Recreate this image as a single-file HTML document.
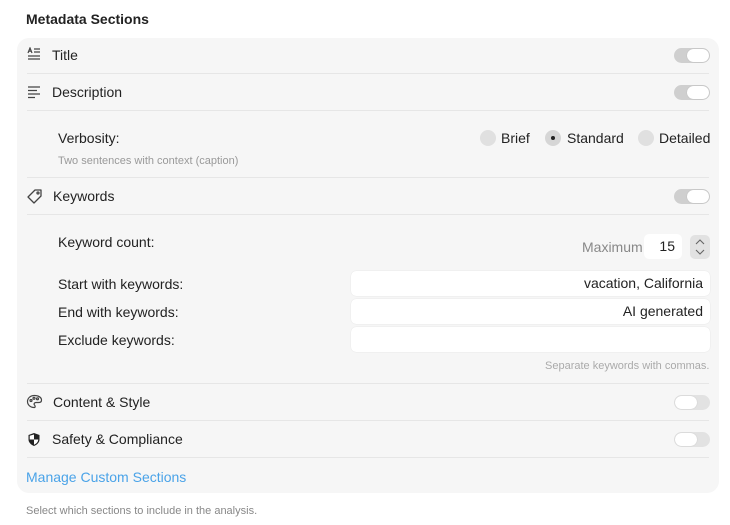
<!DOCTYPE html>
<html><head><meta charset="utf-8"><style>
*{box-sizing:border-box;margin:0;padding:0}
body{width:730px;height:525px;background:#fff;font-family:"Liberation Sans",sans-serif;color:#222;position:relative;overflow:hidden}
.a{position:absolute;white-space:nowrap}
.card{position:absolute;left:17px;top:38px;width:702px;height:455px;background:#f6f6f6;border-radius:12px}
.hr{position:absolute;left:27px;width:682px;height:1px;background:#e6e6e6}
.lbl{font-size:14px;color:#222;line-height:16px}
.tg{position:absolute;left:674px;width:36px;height:15px;border-radius:8px}
.tg.on{background:#cfcfcf}
.tg.off{background:#e2e2e2}
.tg i{position:absolute;top:1px;width:22px;height:13px;border-radius:7px;background:#fff;box-shadow:0 0 1px rgba(0,0,0,.2)}
.tg.on i{right:1px}.tg.off i{left:1px}
.rd{position:absolute;width:16px;height:16px;border-radius:50%;background:#e0e0e0}
.in{position:absolute;left:351px;width:359px;height:25px;background:#fff;border-radius:5px;font-size:14px;text-align:right;padding-right:7px;line-height:25px;box-shadow:0 0 1px rgba(0,0,0,.15)}
.sm{font-size:11px;color:#999}
</style></head><body>
<div class="a" style="left:26px;top:11px;font-size:14px;font-weight:bold;color:#222">Metadata Sections</div>
<div class="card"></div>

<svg class="a" style="left:27px;top:47px" width="15" height="15" viewBox="0 0 15 15" fill="none" stroke="#444" stroke-width="1.2"><path d="M1 6L3 1L5 6M1.8 4.2H4.2M7 2H13M7 5H13M1 9H13M1 12H13"/></svg>
<div class="a lbl" style="left:52px;top:47px">Title</div>
<div class="tg on" style="top:48px"><i></i></div>
<div class="hr" style="top:73px"></div>

<svg class="a" style="left:27px;top:85px" width="15" height="14" viewBox="0 0 15 14" fill="none" stroke="#444" stroke-width="1.2"><path d="M1 2H13M1 5.5H10M1 9H13M1 12.5H8"/></svg>
<div class="a lbl" style="left:52px;top:84px">Description</div>
<div class="tg on" style="top:85px"><i></i></div>
<div class="hr" style="top:110px"></div>

<div class="a lbl" style="left:58px;top:130px">Verbosity:</div>
<div class="rd" style="left:480px;top:130px"></div>
<div class="a lbl" style="left:501px;top:130px">Brief</div>
<div class="rd" style="left:545px;top:130px;background:#d6d6d6"><i style="position:absolute;left:6px;top:6px;width:4px;height:4px;border-radius:50%;background:#222"></i></div>
<div class="a lbl" style="left:567px;top:130px">Standard</div>
<div class="rd" style="left:638px;top:130px"></div>
<div class="a lbl" style="left:659px;top:130px">Detailed</div>
<div class="a sm" style="left:58px;top:155px">Two sentences with context (caption)</div>
<div class="hr" style="top:177px"></div>

<svg class="a" style="left:26px;top:188px" width="17" height="17" viewBox="0 0 17 17" fill="none" stroke="#444" stroke-width="1.3"><path d="M9 2H15V8L8 15L2 9Z" stroke-linejoin="round"/><circle cx="12" cy="5" r="1"/></svg>
<div class="a lbl" style="left:53px;top:188px">Keywords</div>
<div class="tg on" style="top:189px"><i></i></div>
<div class="hr" style="top:214px"></div>

<div class="a lbl" style="left:58px;top:234px">Keyword count:</div>
<div class="a lbl" style="left:582px;top:239px;color:#888">Maximum</div>
<div class="a" style="left:644px;top:234px;width:38px;height:25px;background:#fff;border-radius:5px;font-size:14px;line-height:25px;text-align:right;padding-right:7px">15</div>
<div class="a" style="left:690px;top:235px;width:20px;height:24px;background:#e2e2e2;border-radius:5px"></div>
<svg class="a" style="left:693px;top:237px" width="14" height="20" viewBox="0 0 14 20" fill="none" stroke="#666" stroke-width="1.1"><path d="M3 7L7 3L11 7M3 13L7 17L11 13"/></svg>

<div class="a lbl" style="left:58px;top:276px">Start with keywords:</div>
<div class="in" style="top:271px">vacation, California</div>
<div class="a lbl" style="left:58px;top:304px">End with keywords:</div>
<div class="in" style="top:299px">AI generated</div>
<div class="a lbl" style="left:58px;top:332px">Exclude keywords:</div>
<div class="in" style="top:327px"></div>
<div class="a sm" style="left:545px;top:360px;color:#aaa">Separate keywords with commas.</div>
<div class="hr" style="top:383px"></div>

<svg class="a" style="left:26px;top:394px" width="17" height="15" viewBox="0 0 17 15" fill="none" stroke="#444" stroke-width="1.2"><path d="M8.5 1.5C4 1.5 1.5 4.5 1.5 7.5C1.5 11 4.5 13.5 8 13.5C9.5 13.5 9.5 12 8.5 11C7.5 10 8.5 8.5 10 8.5H13C14.5 8.5 15.5 7.5 15.5 6C15.5 3.5 12.5 1.5 8.5 1.5Z"/><circle cx="5" cy="6.5" r="1"/><circle cx="8" cy="4.3" r="1"/><circle cx="11.5" cy="4.8" r="1"/></svg>
<div class="a lbl" style="left:53px;top:394px">Content &amp; Style</div>
<div class="tg off" style="top:395px"><i></i></div>
<div class="hr" style="top:420px"></div>

<svg class="a" style="left:27px;top:432px" width="14" height="15" viewBox="0 0 14 15"><path d="M7 1L12.5 3V7.5C12.5 10.5 10 12.8 7 14C4 12.8 1.5 10.5 1.5 7.5V3Z" fill="#222"/><path d="M7 2.5V7.5H11.3C11.2 10 9.2 11.8 7 12.8V7.5H2.7V3.8Z" fill="#fff"/></svg>
<div class="a lbl" style="left:52px;top:431px">Safety &amp; Compliance</div>
<div class="tg off" style="top:432px"><i></i></div>
<div class="hr" style="top:457px"></div>

<div class="a lbl" style="left:26px;top:469px;color:#4aa3e8">Manage Custom Sections</div>
<div class="a sm" style="left:26px;top:505px;color:#888">Select which sections to include in the analysis.</div>
</body></html>
